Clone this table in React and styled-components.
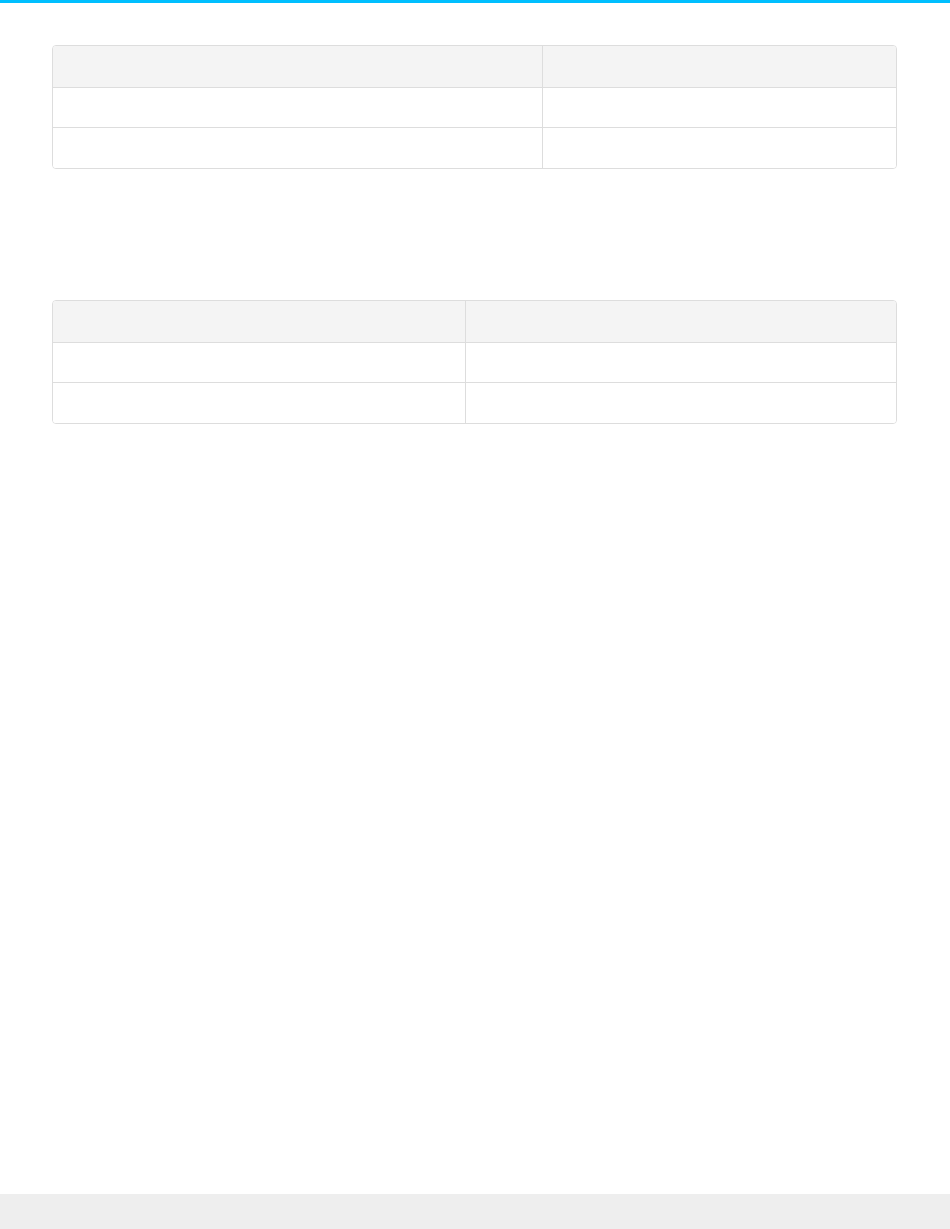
import React from 'react';
import styled, { createGlobalStyle } from 'styled-components';

const GlobalStyle = createGlobalStyle`
    html, body {
        margin: 0;
        padding: 0;
        background: #ffffff;
        font-family: "Open Sans", "Liberation Sans", sans-serif;
        color: #333333;
    }
`;

const Page = styled.div`
    display: flex;
    flex-direction: column;
    min-height: 1229px;
`;

const TopBar = styled.div`
    height: 3px;
    background-color: #00bfff;
`;

const Main = styled.main`
    flex: 1;
    display: flex;
    flex-direction: column;
    gap: 131px;
    padding: 42px 53px 0 52px;
`;

const Table = styled.div`
    border: 1px solid #dddddd;
    border-radius: 4px;
    overflow: hidden;
`;

const Row = styled.div`
    display: grid;
    grid-template-columns: ${(p) => p.$columns};
    height: ${(p) => (p.$head ? '41px' : '39px')};
    background-color: ${(p) => (p.$head ? '#f4f4f4' : '#ffffff')};
    & + & {
        border-top: 1px solid #dddddd;
    }
    &:last-child {
        height: 40px;
    }
`;

const Cell = styled.div`
    padding: 0 12px;
    font-size: 14px;
    & + & {
        border-left: 1px solid #dddddd;
    }
`;

const Footer = styled.footer`
    height: 35px;
    background-color: #eeeeee;
`;

const tables = [
    { columns: '489px 1fr' },
    { columns: '412px 1fr' },
];

const App = () => {
    return (
        <Page>
            <GlobalStyle />
            <TopBar />
            <Main>
                {tables.map((table, i) => (
                    <Table key={i}>
                        <Row $head $columns={table.columns}>
                            <Cell />
                            <Cell />
                        </Row>
                        <Row $columns={table.columns}>
                            <Cell />
                            <Cell />
                        </Row>
                        <Row $columns={table.columns}>
                            <Cell />
                            <Cell />
                        </Row>
                    </Table>
                ))}
            </Main>
            <Footer />
        </Page>
    );
};

export default App;
